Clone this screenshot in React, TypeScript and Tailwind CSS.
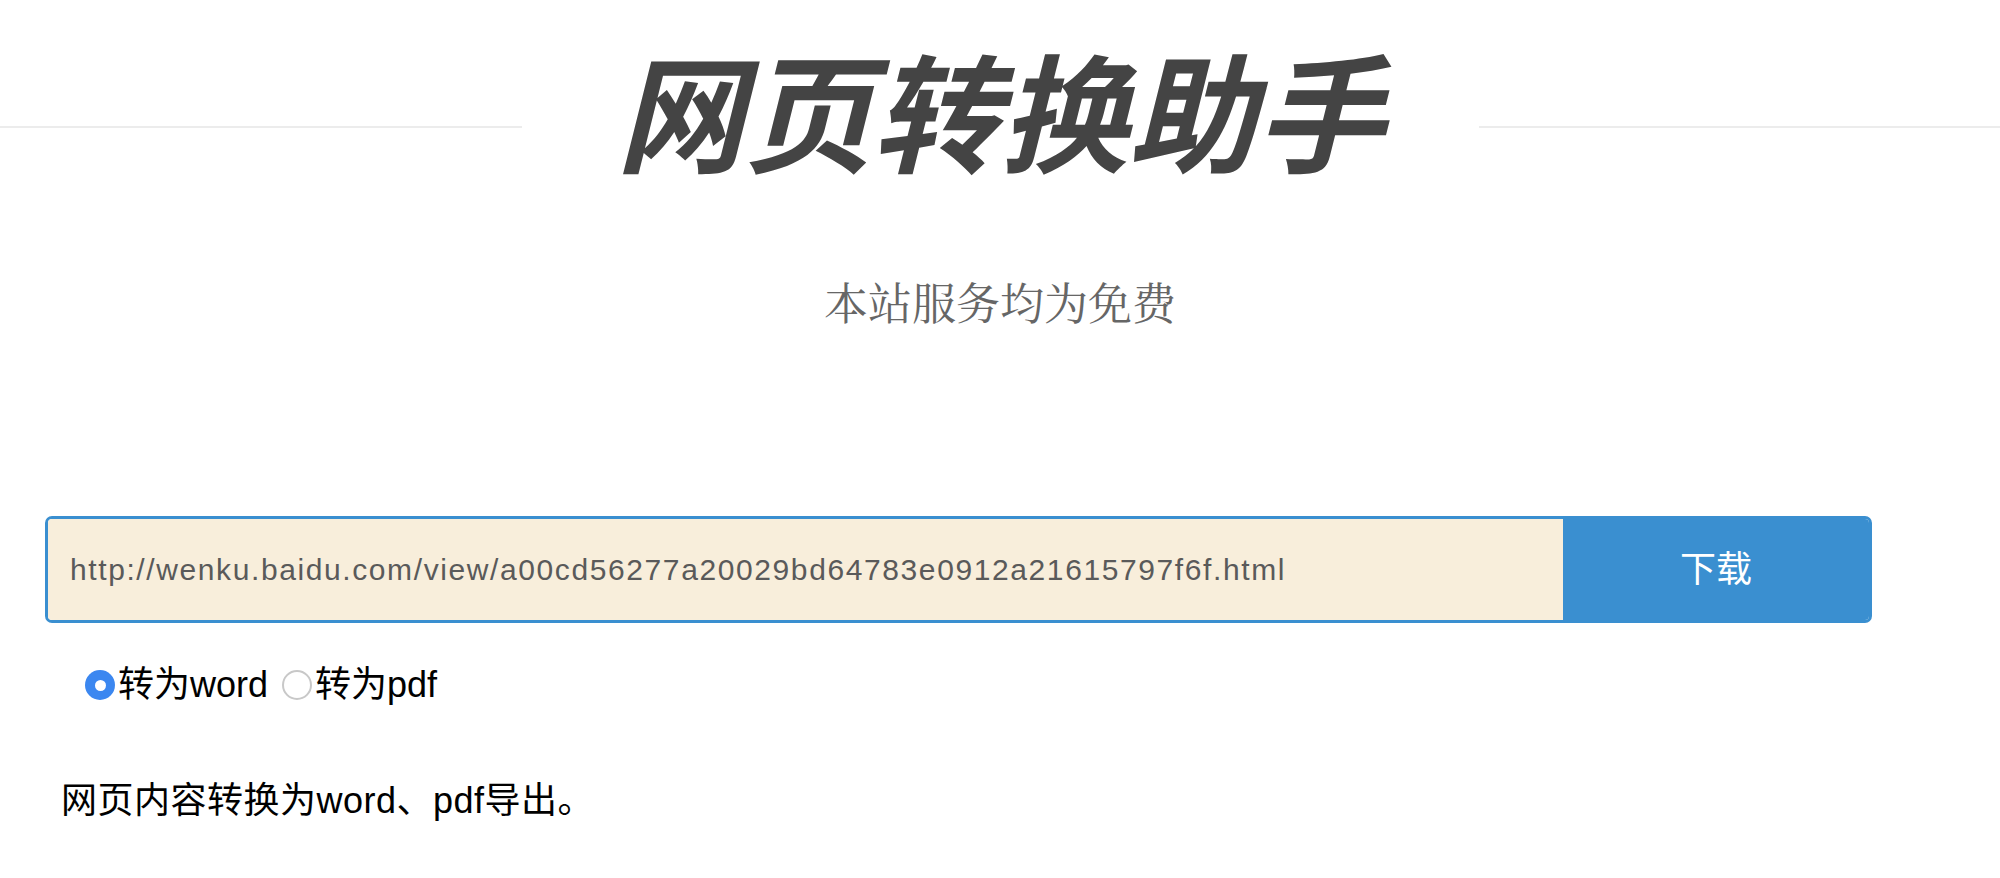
import { useState } from "react";

const cjk = { fontFamily: '"Liberation Sans", "Noto Sans CJK SC", sans-serif' };

function Radio({ checked, label, onClick }: { checked: boolean; label: string; onClick: () => void }) {
  return (
    <label className="flex items-center cursor-pointer" onClick={onClick}>
      {checked ? (
        <span className="w-[30px] h-[30px] rounded-full bg-[#3b87f0] flex items-center justify-center">
          <span className="w-[11px] h-[11px] rounded-full bg-white" />
        </span>
      ) : (
        <span className="w-[30px] h-[30px] rounded-full border-2 border-[#c8c8c8] bg-white" />
      )}
      <span className="text-[36px] text-black leading-none ml-[3px]">{label}</span>
    </label>
  );
}

export default function App() {
  const [mode, setMode] = useState("word");

  return (
    <div className="min-h-screen bg-white" style={cjk}>
      {/* Header */}
      <div className="flex items-start pt-[38px]">
        <div className="flex-1 h-[2px] bg-[#ececec] mt-[88px]" />
        <h1
          className="w-[957px] text-center text-[128px] leading-[140px] font-bold italic text-[#444]"
          style={{ fontFamily: '"Noto Sans CJK SC", sans-serif' }}
        >
          网页转换助手
        </h1>
        <div className="flex-1 h-[2px] bg-[#ececec] mt-[88px]" />
      </div>

      <p
        className="text-center text-[44px] leading-none text-[#666] mt-[101px]"
        style={{ fontFamily: '"Noto Serif CJK SC", "Liberation Serif", serif' }}
      >
        本站服务均为免费
      </p>

      {/* Search */}
      <div className="ml-[45px] w-[1827px] mt-[193px] flex h-[107px] rounded-[7px] border-[3px] border-[#3a8fd0] overflow-hidden">
        <input
          className="flex-1 bg-[#f8eedb] px-[22px] text-[30px] tracking-[1.6px] text-[#5a5a5a] outline-none"
          defaultValue="http://wenku.baidu.com/view/a00cd56277a20029bd64783e0912a21615797f6f.html"
        />
        <button className="w-[306px] bg-[#3a8fd0] text-white text-[36px]">下载</button>
      </div>

      {/* Options */}
      <div className="flex items-center gap-[14px] ml-[85px] mt-[44px]">
        <Radio checked={mode === "word"} label="转为word" onClick={() => setMode("word")} />
        <Radio checked={mode === "pdf"} label="转为pdf" onClick={() => setMode("pdf")} />
      </div>

      <p className="ml-[61px] mt-[80px] text-[36px] tracking-[0.5px] leading-none text-black">网页内容转换为word、pdf导出。</p>
    </div>
  );
}
